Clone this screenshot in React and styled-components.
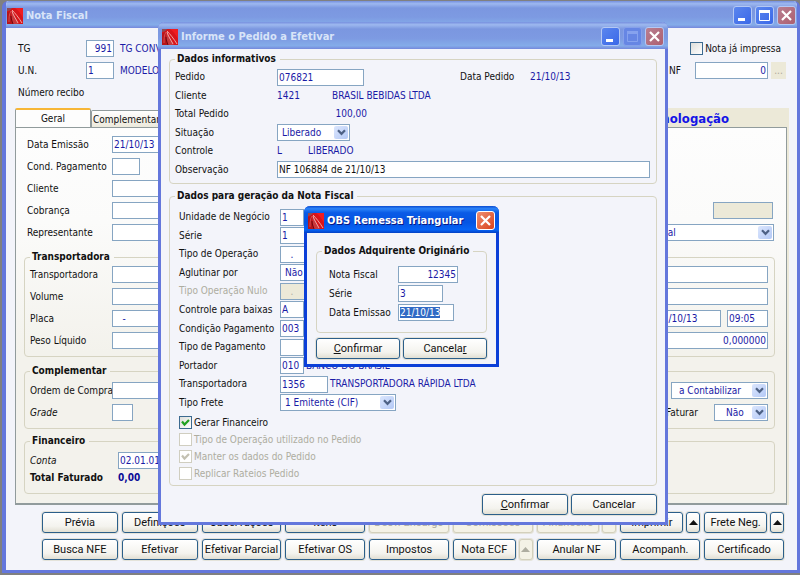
import { useEffect, useRef } from 'react';
import styled, { createGlobalStyle } from 'styled-components';

const uiFont = "'DejaVu Sans Condensed', 'Open Sans', sans-serif";
const buttonFont = "Roboto, 'Liberation Sans', sans-serif";

const actions = [
  { text: 'Prévia' },
  { text: 'Definições' },
  { text: 'Observações' },
  { text: 'Itens' },
  { text: 'Desv. Encargo', disabled: true },
  { text: 'Comissões', disabled: true },
  { text: 'Financeiro', disabled: true, menu: 'off' },
  { text: 'Imprimir', menu: 'on' },
  { text: 'Frete Neg.', menu: 'on' },
  { text: 'Busca NFE' },
  { text: 'Efetivar' },
  { text: 'Efetivar Parcial' },
  { text: 'Efetivar OS' },
  { text: 'Impostos' },
  { text: 'Nota ECF', menu: 'off' },
  { text: 'Anular NF' },
  { text: 'Acompanh.' },
  { text: 'Certificado' },
];

export default function App() {
  return (
    <>
      <GlobalStyle />
      <MainWindow>
        <TitleBar title="Nota Fiscal" controls={['min', 'max', 'close']} />
        <MainBody>
          <Header />
          <Tabs>
            <Tab type="button" $active>
              Geral
            </Tab>
            <Tab type="button">Complementar</Tab>
            <Environment>Ambiente de Homologação</Environment>
          </Tabs>
          <TabPanel>
            <GeralForm />
          </TabPanel>
          <Actions>
            {actions.map(({ text, disabled, menu }) => (
              <Split key={text}>
                <Button type="button" disabled={disabled}>
                  {text}
                </Button>
                {menu && (
                  <MenuButton
                    type="button"
                    disabled={menu === 'off'}
                    aria-label={'Mais opções: ' + text}
                  >
                    <svg width="9" height="5" viewBox="0 0 9 5">
                      <path d="M4.5 0L9 5H0z" fill="currentColor" />
                    </svg>
                  </MenuButton>
                )}
              </Split>
            ))}
          </Actions>
        </MainBody>
      </MainWindow>
      <PedidoDialog />
      <RemessaDialog />
    </>
  );
}

function Header() {
  return (
    <HeaderArea>
      <Stack>
        <Row>
          <Label htmlFor="tg" $width={68}>
            TG
          </Label>
          <Field id="tg" defaultValue="991" $width={28} $right />
          <Value $indent={6}>TG CONVENCIONAL</Value>
        </Row>
        <Row>
          <Label htmlFor="un" $width={68}>
            U.N.
          </Label>
          <Field id="un" defaultValue="1" $width={28} />
          <Value $indent={6}>MODELO</Value>
        </Row>
        <Row>
          <Label as="span">Número recibo</Label>
        </Row>
      </Stack>
      <Stack>
        <Row>
          <Spacer />
          <Check id="impressa" text="Nota já impressa" />
          <Gap $size={5} />
        </Row>
        <Row>
          <Label htmlFor="nf" $width={26}>
            NF
          </Label>
          <Field id="nf" defaultValue="0" $width={73} $right />
          <Gap $size={3} />
          <Ellipsis type="button" disabled>
            ...
          </Ellipsis>
        </Row>
      </Stack>
    </HeaderArea>
  );
}

function GeralForm() {
  return (
    <>
      <Stack>
        <Row>
          <Label htmlFor="emissao" $width={85}>
            Data Emissão
          </Label>
          <Field id="emissao" defaultValue="21/10/13" $width={70} />
        </Row>
        <Row>
          <Label htmlFor="condPag" $width={85}>
            Cond. Pagamento
          </Label>
          <Field id="condPag" $width={28} />
        </Row>
        <Row>
          <Label htmlFor="cliente" $width={85}>
            Cliente
          </Label>
          <Field id="cliente" $width={70} />
        </Row>
        <Row>
          <Label htmlFor="cobranca" $width={85}>
            Cobrança
          </Label>
          <Field id="cobranca" $width={70} />
          <Spacer />
          <Field aria-label="Código" disabled $width={60} />
          <Gap $size={1} />
        </Row>
        <Row>
          <Label htmlFor="representante" $width={85}>
            Representante
          </Label>
          <Field id="representante" $width={70} />
          <Spacer />
          <Select label="Tipo de nota" options={['Nota Normal']} $width={160} />
        </Row>
      </Stack>

      <Group $gap={8} $top={1} $bottom={7}>
        <Legend>Transportadora</Legend>
        <Stack>
          <Row>
            <Label htmlFor="transp" $width={82}>
              Transportadora
            </Label>
            <Field id="transp" $grow />
          </Row>
          <Row>
            <Label htmlFor="volume" $width={82}>
              Volume
            </Label>
            <Field id="volume" $grow />
          </Row>
          <Row>
            <Label htmlFor="placa" $width={82}>
              Placa
            </Label>
            <Field id="placa" defaultValue="   -" $width={70} />
            <Spacer />
            <Field aria-label="Data de saída" defaultValue="21/10/13" $width={66} />
            <Gap $size={6} />
            <Field aria-label="Hora de saída" defaultValue="09:05" $width={41} />
          </Row>
          <Row>
            <Label htmlFor="peso" $width={82}>
              Peso Líquido
            </Label>
            <Field id="peso" $width={120} />
            <Spacer />
            <Field
              aria-label="Peso Bruto"
              defaultValue="0,000000"
              $width={120}
              $right
            />
          </Row>
        </Stack>
      </Group>

      <Group $gap={6} $top={3} $bottom={7}>
        <Legend>Complementar</Legend>
        <Stack>
          <Row>
            <Label htmlFor="ordem" $width={82}>
              Ordem de Compra
            </Label>
            <Field id="ordem" $width={70} />
            <Spacer />
            <Select
              label="Contabilizar"
              options={['a Contabilizar']}
              $width={97}
              $indent={7}
            />
          </Row>
          <Row>
            <Label htmlFor="grade" $width={82} $italic>
              Grade
            </Label>
            <Field id="grade" $width={21} />
            <Spacer />
            <Label htmlFor="faturar">Faturar</Label>
            <Gap $size={16} />
            <Select id="faturar" options={['Não']} $width={54} $indent={11} />
          </Row>
        </Stack>
      </Group>

      <Group $gap={4} $top={3} $bottom={7}>
        <Legend>Financeiro</Legend>
        <Row>
          <Label htmlFor="conta" $width={88} $italic>
            Conta
          </Label>
          <Field id="conta" defaultValue="02.01.01" $width={70} />
        </Row>
        <Row>
          <Total>Total Faturado</Total>
          <Total $blue>0,00</Total>
        </Row>
      </Group>
    </>
  );
}

function PedidoDialog() {
  return (
    <Dialog $left={158} $top={22} $width={510} aria-label="Informe o Pedido a Efetivar">
      <TitleBar
        title="Informe o Pedido a Efetivar"
        controls={['min', 'maxOff', 'close']}
      />
      <DialogBody>
        <Group $top={1} $bottom={4}>
          <Legend>Dados informativos</Legend>
          <EvenRows $height={111}>
            <Row>
              <Label htmlFor="pedido" $width={102}>
                Pedido
              </Label>
              <Field id="pedido" defaultValue="076821" $width={87} />
              <Gap $size={96} />
              <Label as="span" $width={70}>
                Data Pedido
              </Label>
              <Value>21/10/13</Value>
            </Row>
            <Row>
              <Label as="span" $width={102}>
                Cliente
              </Label>
              <Value $width={55}>1421</Value>
              <Value>BRASIL BEBIDAS LTDA</Value>
            </Row>
            <Row>
              <Label as="span" $width={102}>
                Total Pedido
              </Label>
              <Value $width={90} $right>
                100,00
              </Value>
            </Row>
            <Row>
              <Label htmlFor="situacao" $width={102}>
                Situação
              </Label>
              <Select id="situacao" options={['Liberado']} $width={73} />
            </Row>
            <Row>
              <Label as="span" $width={102}>
                Controle
              </Label>
              <Value $width={31}>L</Value>
              <Value>LIBERADO</Value>
            </Row>
            <Row>
              <Label htmlFor="obs" $width={102}>
                Observação
              </Label>
              <Field id="obs" defaultValue="NF 106884 de 21/10/13" $grow $dark />
            </Row>
          </EvenRows>
        </Group>

        <Group $gap={4} $top={4} $bottom={3}>
          <Legend>Dados para geração da Nota Fiscal</Legend>
          <Indent>
            <EvenRows $height={204}>
              <Row>
                <Label htmlFor="unidade" $width={101}>
                  Unidade de Negócio
                </Label>
                <Field id="unidade" defaultValue="1" $width={24} />
              </Row>
              <Row>
                <Label htmlFor="serie" $width={101}>
                  Série
                </Label>
                <Field id="serie" defaultValue="1" $width={36} />
              </Row>
              <Row>
                <Label htmlFor="tipoOp" $width={101}>
                  Tipo de Operação
                </Label>
                <Field id="tipoOp" defaultValue="   ." $width={36} />
              </Row>
              <Row>
                <Label htmlFor="aglutinar" $width={101}>
                  Aglutinar por
                </Label>
                <Select id="aglutinar" options={['Não']} $width={54} />
              </Row>
              <Row>
                <Label htmlFor="nulo" $width={101} $muted>
                  Tipo Operação Nulo
                </Label>
                <Field id="nulo" defaultValue="   ." disabled $width={36} />
              </Row>
              <Row>
                <Label htmlFor="baixas" $width={101}>
                  Controle para baixas
                </Label>
                <Field id="baixas" defaultValue="A" $width={24} />
              </Row>
              <Row>
                <Label htmlFor="condicao" $width={101}>
                  Condição Pagamento
                </Label>
                <Field id="condicao" defaultValue="003" $width={24} />
              </Row>
              <Row>
                <Label htmlFor="tipoPag" $width={101}>
                  Tipo de Pagamento
                </Label>
                <Field id="tipoPag" $width={24} />
              </Row>
              <Row>
                <Label htmlFor="portador" $width={101}>
                  Portador
                </Label>
                <Field id="portador" defaultValue="010" $width={24} />
                <Value $indent={2}>BANCO DO BRASIL</Value>
              </Row>
              <Row>
                <Label htmlFor="transportadora" $width={101}>
                  Transportadora
                </Label>
                <Field id="transportadora" defaultValue="1356" $width={48} />
                <Value $indent={2}>TRANSPORTADORA RÁPIDA LTDA</Value>
              </Row>
              <Row>
                <Label htmlFor="frete" $width={101}>
                  Tipo Frete
                </Label>
                <Select id="frete" options={['1 Emitente (CIF)']} $width={116} />
              </Row>
            </EvenRows>
            <Checks>
              <Check id="gerar" text="Gerar Financeiro" checked />
              <Check id="utilizado" text="Tipo de Operação utilizado no Pedido" disabled />
              <Check id="manter" text="Manter os dados do Pedido" checked disabled />
              <Check id="rateios" text="Replicar Rateios Pedido" disabled />
            </Checks>
          </Indent>
        </Group>

        <DialogButtons $width={86}>
          <Button type="button">
            <u>C</u>onfirmar
          </Button>
          <Button type="button">Cancelar</Button>
        </DialogButtons>
      </DialogBody>
    </Dialog>
  );
}

function RemessaDialog() {
  const emissao = useRef(null);

  useEffect(() => {
    emissao.current.focus();
    emissao.current.select();
  }, []);

  return (
    <Dialog $left={304} $top={206} $width={195} $active aria-label="OBS Remessa Triangular">
      <TitleBar title="OBS Remessa Triangular" controls={['close']} active />
      <SmallBody>
        <Group $top={7} $bottom={7}>
          <Legend>Dados Adquirente Originário</Legend>
          <SmallRows>
            <Row>
              <Label htmlFor="rNota" $width={69}>
                Nota Fiscal
              </Label>
              <Field id="rNota" defaultValue="12345" $width={60} $right />
            </Row>
            <Row>
              <Label htmlFor="rSerie" $width={69}>
                Série
              </Label>
              <Field id="rSerie" defaultValue="3" $width={45} />
            </Row>
            <Row>
              <Label htmlFor="rEmissao" $width={69}>
                Data Emissao
              </Label>
              <Field id="rEmissao" ref={emissao} defaultValue="21/10/13" $width={56} />
            </Row>
          </SmallRows>
        </Group>
        <DialogButtons $width={84} $tight>
          <Button type="button">
            <u>C</u>onfirmar
          </Button>
          <Button type="button">
            Cancela<u>r</u>
          </Button>
        </DialogButtons>
      </SmallBody>
    </Dialog>
  );
}

function TitleBar({ title, controls, active }) {
  return (
    <Bar $active={active}>
      <AppIcon />
      <Title $active={active}>{title}</Title>
      {controls.map(kind => (
        <WindowButton
          key={kind}
          type="button"
          aria-label={labels[kind]}
          disabled={kind === 'maxOff'}
          $kind={kind}
          $active={active}
        >
          <svg width="17" height="17" viewBox="0 0 17 17" fill="none" stroke="currentColor">
            {kind === 'min' && <path d="M4 12.5h7" strokeWidth="3" />}
            {(kind === 'max' || kind === 'maxOff') && (
              <>
                <path d="M3.5 3.5h10v10h-10z" />
                <path d="M3 4.5h11" strokeWidth="3" />
              </>
            )}
            {kind === 'close' && <path d="M4 4l9 9M13 4l-9 9" strokeWidth="2.2" />}
          </svg>
        </WindowButton>
      ))}
    </Bar>
  );
}

const labels = {
  min: 'Minimizar',
  max: 'Maximizar',
  maxOff: 'Maximizar',
  close: 'Fechar',
};

function AppIcon() {
  return (
    <svg width="16" height="16" viewBox="0 0 16 16" aria-hidden="true">
      <rect width="16" height="16" fill="#d8141a" />
      <path d="M8 0h8v10C14 6 12 3 8 0z" fill="#f01c20" />
      <path d="M0 4c2 0 3-1 4-2l1 14H0z" fill="#b8141a" />
      <path d="M0 0h5C4 2 2 3 0 3z" fill="#8d4a58" />
      <path d="M5 2c1 4 4 10 7 14H6C5 12 4 7 5 2z" fill="#c8383c" />
      <path
        d="M5 2c3 3 7 8 10 13M5 3c1 4 4 8 6 12"
        stroke="#f4b3b0"
        strokeWidth=".9"
        fill="none"
      />
      <path d="M4 3c-2 3-2 7-2 11" stroke="#dc5a5c" strokeWidth=".8" fill="none" />
      <path d="M4 8c0 3 1 5 2 8" stroke="#6d0a10" fill="none" />
    </svg>
  );
}

function Select({ id, label, options, $width, $indent }) {
  return (
    <SelectBox $width={$width}>
      <NativeSelect id={id} aria-label={label} $indent={$indent}>
        {options.map(option => (
          <option key={option}>{option}</option>
        ))}
      </NativeSelect>
      <Arrow>
        <svg width="9" height="7" viewBox="0 0 9 7">
          <path d="M1 1.2l3.5 3.6L8 1.2" fill="none" stroke="#4d6185" strokeWidth="2.2" />
        </svg>
      </Arrow>
    </SelectBox>
  );
}

function Check({ id, text, checked, disabled }) {
  return (
    <CheckRow>
      <Box id={id} type="checkbox" defaultChecked={checked} disabled={disabled} />
      <Tick viewBox="0 0 13 13">
        {checked && (
          <path
            d="M3 5.5l2.5 3L10 4"
            fill="none"
            stroke={disabled ? '#c3c1b2' : '#21a121'}
            strokeWidth="2.2"
          />
        )}
      </Tick>
      <Label htmlFor={id} $muted={disabled}>
        {text}
      </Label>
    </CheckRow>
  );
}

const GlobalStyle = createGlobalStyle`
  * {
    box-sizing: border-box;
  }

  body {
    margin: 0;
    background: #808080;
    color: #111;
    font: 10px/16px ${uiFont};
  }

  input, select {
    font: inherit;
  }

  ::selection {
    background: #316ac5;
    color: white;
  }
`;

const MainWindow = styled.main`
  margin: 1px 0 3px 2px;
  border: solid #6477dc;
  border-width: 0 3px 3px 4px;
  border-radius: 6px 6px 0 0;
  background: #f3f4fa;
  overflow: hidden;
`;

const Dialog = styled.section.attrs({ role: 'dialog' })`
  position: absolute;
  left: ${p => p.$left}px;
  top: ${p => p.$top}px;
  width: ${p => p.$width}px;
  border: solid ${p => (p.$active ? '#0b3fd8' : '#6477dc')};
  border-width: 0 3px 3px;
  border-radius: 6px 6px 0 0;
  background: #f3f4fa;
`;

const Bar = styled.header`
  display: flex;
  align-items: center;
  gap: 3px;
  height: 27px;
  margin: 0 -3px;
  padding: 2px 4px 0;
  border-radius: 6px 6px 0 0;
  background: ${p =>
    p.$active
      ? 'linear-gradient(#0a4bd0, #2b83f8 10%, #0a5be6 25%, #0554e3 60%, #0664f6 88%, #0340c4)'
      : 'linear-gradient(#7690df, #9db8ef 10%, #7b97e0 26%, #7d9ae2 60%, #84ace9 88%, #7488dc)'};
`;

const Title = styled.h1`
  flex: 1;
  margin: 0;
  font-size: 11px;
  white-space: nowrap;
  color: ${p => (p.$active ? 'white' : '#d8e4f8')};
  text-shadow: ${p => (p.$active ? '1px 1px #0a1883' : 'none')};
`;

const WindowButton = styled.button`
  display: grid;
  place-items: center;
  width: 19px;
  height: 19px;
  padding: 0;
  border: 1px solid ${p => (p.$active ? '#fff' : '#b4c8f4')};
  border-radius: 3px;
  color: white;
  background: ${p =>
    p.$kind !== 'close'
      ? 'linear-gradient(135deg, #5b86ee, #3a68e8)'
      : p.$active
      ? 'linear-gradient(135deg, #ee8f72, #d9421b)'
      : 'linear-gradient(135deg, #b97f91, #ad5f70)'};
  &:disabled {
    color: #86a2ee;
    border-color: #86a0ea;
    background: #6686e4;
  }
`;

const MainBody = styled.div`
  padding: 12px 8px 10px 9px;
`;

const HeaderArea = styled.div`
  display: flex;
  justify-content: space-between;
  padding: 0 3px;
  margin-bottom: 7px;
`;

const Stack = styled.div`
  display: flex;
  flex-direction: column;
  gap: 5px;
`;

const Row = styled.div`
  display: flex;
  align-items: center;
  height: 17px;
`;

const Spacer = styled.div`
  flex: 1;
`;

const Gap = styled.div`
  flex: none;
  width: ${p => p.$size}px;
`;

const Label = styled.label`
  flex: none;
  width: ${p => (p.$width ? p.$width + 'px' : 'auto')};
  white-space: nowrap;
  font-style: ${p => (p.$italic ? 'italic' : 'normal')};
  color: ${p => (p.$muted ? '#aeada0' : 'inherit')};
`;

const Value = styled.span`
  flex: none;
  width: ${p => (p.$width ? p.$width + 'px' : 'auto')};
  margin-left: ${p => p.$indent ?? 0}px;
  text-align: ${p => (p.$right ? 'right' : 'left')};
  white-space: nowrap;
  color: #1a1aa6;
`;

const Field = styled.input`
  flex: ${p => (p.$grow ? '1' : 'none')};
  width: ${p => (p.$width ? p.$width + 'px' : 'auto')};
  min-width: 0;
  height: 17px;
  padding: 0 1px;
  border: 1px solid #86a5c2;
  outline: none;
  background: white;
  color: ${p => (p.$dark ? '#111' : '#1a1aa6')};
  text-align: ${p => (p.$right ? 'right' : 'left')};
  &:disabled {
    background: #ece9d8;
    color: #aeada0;
  }
`;

const Ellipsis = styled.button`
  width: 15px;
  height: 17px;
  padding: 0;
  border: none;
  background: #ece9d8;
  color: #aca899;
  font: 10px/16px ${uiFont};
`;

const SelectBox = styled.div`
  position: relative;
  flex: none;
  width: ${p => p.$width}px;
  height: 17px;
`;

const NativeSelect = styled.select`
  appearance: none;
  display: block;
  width: 100%;
  height: 17px;
  padding: 0 16px 0 ${p => p.$indent ?? 4}px;
  border: 1px solid #86a5c2;
  border-radius: 0;
  background: white;
  color: #1a1aa6;
`;

const Arrow = styled.span`
  position: absolute;
  right: 2px;
  top: 2px;
  display: grid;
  place-items: center;
  width: 14px;
  height: 13px;
  border-radius: 2px;
  background: linear-gradient(135deg, #dbe6fd, #b4c9f6);
  pointer-events: none;
`;

const CheckRow = styled.div`
  display: grid;
  grid-template-columns: 13px auto;
  column-gap: 2px;
  align-items: center;
  justify-content: start;
  height: 17px;
`;

const Box = styled.input`
  appearance: none;
  grid-area: 1 / 1;
  width: 13px;
  height: 13px;
  margin: 0;
  border: 1px solid #3c6a90;
  background: linear-gradient(135deg, #dededa, #fff);
  &:disabled {
    border-color: #d0cec0;
    background: white;
  }
`;

const Tick = styled.svg`
  grid-area: 1 / 1;
  width: 13px;
  height: 13px;
  pointer-events: none;
`;

const Tabs = styled.nav`
  display: flex;
  align-items: flex-end;
  height: 19px;
`;

const Tab = styled.button`
  height: ${p => (p.$active ? 19 : 17)}px;
  width: ${p => (p.$active ? '76px' : 'auto')};
  padding: 0 1px;
  border: 1px solid #919b9c;
  border-bottom: none;
  border-top: ${p => (p.$active ? '2px solid #f7b637' : '1px solid #919b9c')};
  border-radius: 2px 2px 0 0;
  background: ${p => (p.$active ? '#fdfdfd' : 'linear-gradient(#fff, #ece9dc)')};
  color: #111;
  font: 10px/15px ${uiFont};
`;

const Environment = styled.strong`
  flex: 1;
  height: 19px;
  padding-right: 60px;
  background: #ece9d8;
  color: #1414e6;
  font-size: 13px;
  line-height: 21px;
  text-align: right;
`;

const TabPanel = styled.div`
  padding: 8px 11px 9px 8px;
  margin-right: 2px;
  border: solid #919b9c;
  border-width: 1px 1px 2px;
  box-shadow: 2px 0 #ece9d8;
  background: linear-gradient(#fdfdfd, #fbfbfa 25%, #f3f2ec 60%);

  > ${Stack} {
    padding: 0 1px 0 3px;
  }
`;

const Group = styled.fieldset`
  min-width: 0;
  margin: ${p => p.$gap ?? 0}px 0 0;
  padding: ${p => p.$top}px 6px ${p => p.$bottom}px 5px;
  border: 1px solid #d6d4c2;
  border-radius: 4px;
`;

const Legend = styled.legend`
  padding: 0 4px 0 2px;
  font-weight: bold;
`;

const Total = styled.strong`
  width: ${p => (p.$blue ? 'auto' : '88px')};
  white-space: nowrap;
  color: ${p => (p.$blue ? '#0a0a96' : 'inherit')};
`;

const Actions = styled.div`
  display: grid;
  grid-template-columns: 76fr 76fr repeat(7, 80fr);
  gap: 6px 4px;
  padding: 7px 5px 0 27px;
`;

const Split = styled.div`
  display: flex;
  gap: 3px;
  min-width: 0;
`;

const Button = styled.button`
  flex: 1;
  min-width: 0;
  height: 21px;
  padding: 0;
  border: 1px solid #2c5f8a;
  border-radius: 3px;
  background: linear-gradient(#fff, #f4f3ee 70%, #e2dfd3);
  box-shadow: 0 0 0 1px #e4e3da;
  color: #111;
  font: 11px/18px ${buttonFont};
  white-space: nowrap;
  &:disabled {
    border-color: #d3d0bc;
    background: #f4f2e6;
    color: #aeada0;
  }
`;

const MenuButton = styled(Button)`
  flex: none;
  display: grid;
  place-items: center;
  width: 14px;
`;

const DialogBody = styled.div`
  padding: 2px 8px 7px;
`;

const SmallBody = styled.div`
  padding: 10px 9px 5px;
`;

const EvenRows = styled.div`
  display: grid;
  grid-auto-rows: 1fr;
  align-items: center;
  min-height: ${p => p.$height}px;
`;

const Indent = styled.div`
  padding-left: 4px;
`;

const Checks = styled.div`
  margin-top: 2px;
`;

const SmallRows = styled.div`
  display: grid;
  gap: 2px;
  padding: 0 0 4px 7px;
`;

const DialogButtons = styled.footer`
  display: flex;
  justify-content: flex-end;
  gap: 3px;
  margin-top: ${p => (p.$tight ? 5 : 8)}px;

  ${Button} {
    flex: 0 1 ${p => p.$width}px;
  }
`;
